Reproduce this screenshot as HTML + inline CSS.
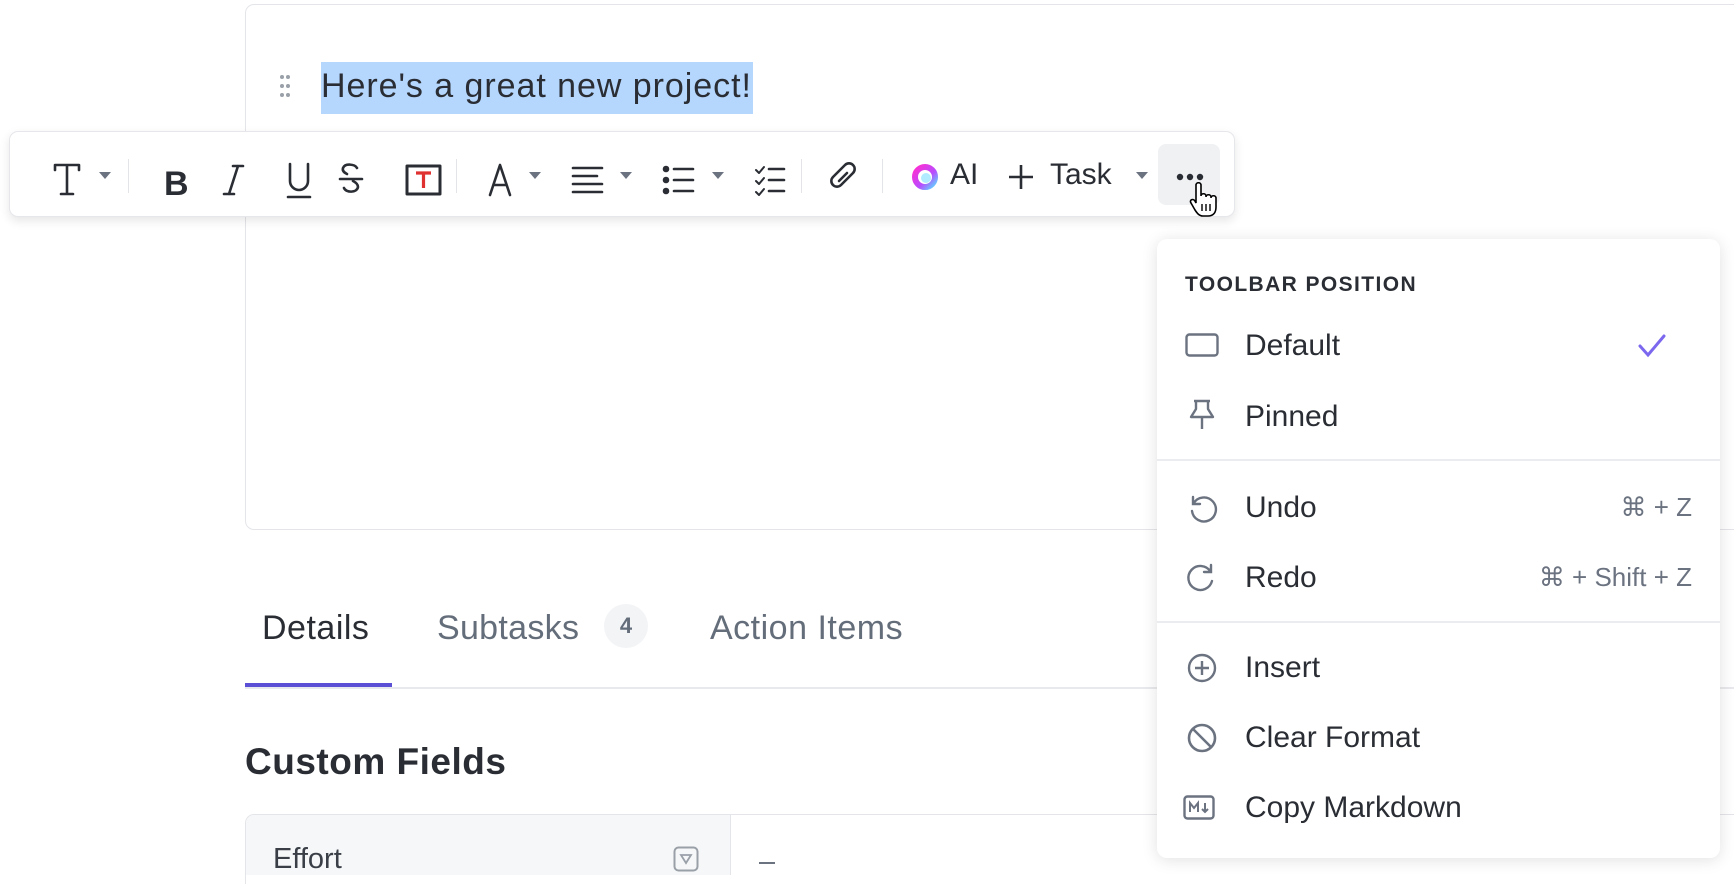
<!DOCTYPE html>
<html><head><meta charset="utf-8"><style>
*{box-sizing:border-box;margin:0;padding:0}
body{width:1734px;height:870px;overflow:hidden;background:#fff;font-family:"Liberation Sans",sans-serif;color:#2a2e34;position:relative}
.abs{position:absolute}
.card{left:245px;top:4px;width:1600px;height:526px;border:1px solid #e4e5e9;border-radius:9px}
.sel{left:321px;top:62px;height:52px;width:432px;background:#b5d6fd}
.title{left:321px;top:67px;font-size:34px;letter-spacing:.95px;color:#2a2e34;white-space:nowrap}
.tb{left:9px;top:131px;width:1226px;height:86px;background:#fff;border:1px solid #e6e7eb;border-radius:9px;box-shadow:0 4px 10px rgba(0,0,0,.10);z-index:5}
.sep{position:absolute;top:27px;width:1px;height:34px;background:#e2e4e8}
.menu{left:1157px;top:239px;width:563px;height:619px;background:#fff;border-radius:10px;box-shadow:0 2px 16px rgba(0,0,0,.12);z-index:10}
.mi{position:absolute;left:88px;font-size:30px;color:#2a2e34;white-space:nowrap}
.sc{position:absolute;right:28px;font-size:26px;color:#6b7280;white-space:nowrap}
.hr{position:absolute;left:0;right:0;height:2px;background:#ebecef}
.ic{position:absolute;left:28px}
</style></head><body>
<div class="abs card"></div>
<svg class="abs" style="left:279px;top:74px" width="12" height="24"><g fill="#9aa0a8"><circle cx="3" cy="3" r="2"/><circle cx="9" cy="3" r="2"/><circle cx="3" cy="12" r="2"/><circle cx="9" cy="12" r="2"/><circle cx="3" cy="21" r="2"/><circle cx="9" cy="21" r="2"/></g></svg>
<div class="abs sel"></div>
<div class="abs title">Here's a great new project!</div>

<div class="abs tb">
<svg width="1226" height="86" style="position:absolute;left:-1px;top:-1px" fill="none" stroke="#2a2e34" stroke-width="2.6" stroke-linecap="round" stroke-linejoin="round">
<path d="M46 34h24M46 34v5M70 34v5M58 34v29M52 63h12"/>
<path d="M90 41h12l-6 7z" fill="#6b7280" stroke="none"/>
<text x="155" y="64" font-family="Liberation Sans" font-weight="bold" font-size="34" fill="#2a2e34" stroke="none">B</text>
<path d="M224 35h10M215 63h10M229 35l-9 28"/>
<path d="M281 33v17a9 9 0 0 0 18 0v-17M279 66h22"/>
<path d="M348 37c-2-4-12-5-14 0c-1 3 2 5 4 6M335 57c2 5 13 5 14-1c0-3-3-5-5-6M331 48h22"/>
<rect x="398" y="35" width="33" height="28" stroke-width="3"/>
<path d="M407 42h15M414.5 42v15" stroke="#e03131" stroke-width="3.2" stroke-linecap="butt"/>
<path d="M481 64l10-30l10 30M485 54h12"/>
<path d="M520 41h12l-6 7z" fill="#6b7280" stroke="none"/>
<path d="M564 37h29M564 45h24M564 53h29M564 61h29"/>
<path d="M611 41h12l-6 7z" fill="#6b7280" stroke="none"/>
<circle cx="657" cy="38" r="2" fill="#2a2e34"/><circle cx="657" cy="49" r="2" fill="#2a2e34"/><circle cx="657" cy="60" r="2" fill="#2a2e34"/>
<path d="M665 38h19M665 49h19M665 60h19"/>
<path d="M703 41h12l-6 7z" fill="#6b7280" stroke="none"/>
<path d="M747 39l3 3 5-6M747 50l3 3 5-6M747 61l3 3 5-6" stroke-width="2"/>
<path d="M760 38h15M760 49h15M760 60h15"/>
<path d="M838 48l-6 6a5 5 0 0 1-8-8l6-6M838 48l6-6a5 5 0 0 0-8-8l-6 6M830 50l8-8"/>
</svg>
<div class="sep" style="left:118px"></div>
<div class="sep" style="left:446px"></div>
<div class="sep" style="left:791px"></div>
<div class="sep" style="left:872px"></div>
<svg class="abs" style="left:900px;top:30px" width="30" height="30"><defs><linearGradient id="g" x1="0" y1="0" x2="1" y2="1"><stop offset="0" stop-color="#ff2ed1"/><stop offset=".6" stop-color="#b84cff"/><stop offset="1" stop-color="#5ed4ff"/></linearGradient></defs><circle cx="15" cy="15" r="10" fill="none" stroke="url(#g)" stroke-width="6"/><circle cx="16" cy="16" r="5" fill="#8fe3ff" opacity=".7"/></svg>
<div class="abs" style="left:940px;top:26px;font-size:30px">AI</div>
<svg class="abs" style="left:997px;top:31px" width="28" height="28"><path d="M14 2v24M2 14h24" stroke="#2a2e34" stroke-width="2.6"/></svg>
<div class="abs" style="left:1040px;top:26px;font-size:30px">Task</div>
<svg class="abs" style="left:1125px;top:39px" width="14" height="10"><path d="M1 1h12l-6 7z" fill="#6b7280"/></svg>
<div class="abs" style="left:1148px;top:12px;width:62px;height:61px;background:#f0f1f3;border-radius:8px"></div>
<svg class="abs" style="left:1165px;top:40px" width="30" height="10"><g fill="#2a2e34"><circle cx="5" cy="5" r="3.2"/><circle cx="15" cy="5" r="3.2"/><circle cx="25" cy="5" r="3.2"/></g></svg>
<svg class="abs" style="left:1179px;top:50px" width="30" height="36"><path d="M7 3c0-3 5-3 5 0v11c0-3 5-3 5 0v1c0-3 5-3 5 0v1c0-3 5-3 5 0v9c0 6-3 9-8 9h-5c-4 0-6-3-8-6l-4-7c-2-3 2-5 4-2l1 2z" fill="#fff" stroke="#000" stroke-width="1.6"/><path d="M13 22v7M17 22v7M21 22v7" stroke="#000" stroke-width="1.4"/></svg>
</div>

<div class="abs menu">
<div class="abs" style="left:28px;top:34px;font-size:21px;font-weight:bold;letter-spacing:1.4px;color:#2a2e34">TOOLBAR POSITION</div>
<svg class="ic" style="top:94px" width="34" height="24"><rect x="1.5" y="1.5" width="31" height="21" rx="3" fill="none" stroke="#6b7280" stroke-width="2.4"/></svg>
<div class="mi" style="top:90px">Default</div>
<svg class="abs" style="left:480px;top:94px" width="30" height="26"><path d="M3 13l8 9 16-19" fill="none" stroke="#7b68ee" stroke-width="3" stroke-linecap="round"/></svg>
<svg class="ic" style="top:160px" width="34" height="32"><path d="M9 2h16M11 2v8l-5 8h22l-5-8v-8M17 18v12" fill="none" stroke="#6b7280" stroke-width="2.4" stroke-linejoin="round"/></svg>
<div class="mi" style="top:161px">Pinned</div>
<div class="hr" style="top:220px"></div>
<svg class="ic" style="top:252px" width="34" height="34"><path d="M8 6v7h7M8.5 12.5A12 12 0 1 1 7 20" fill="none" stroke="#6b7280" stroke-width="2.4" stroke-linecap="round"/></svg>
<div class="mi" style="top:252px">Undo</div>
<div class="sc" style="top:253px">⌘ + Z</div>
<svg class="ic" style="top:322px" width="34" height="34"><path d="M26 4v7h-7M25.5 10.5A12 12 0 1 0 27 20" fill="none" stroke="#6b7280" stroke-width="2.4" stroke-linecap="round"/></svg>
<div class="mi" style="top:322px">Redo</div>
<div class="sc" style="top:323px">⌘ + Shift + Z</div>
<div class="hr" style="top:382px"></div>
<svg class="ic" style="top:412px" width="34" height="34"><circle cx="17" cy="17" r="13" fill="none" stroke="#6b7280" stroke-width="2.4"/><path d="M17 10v14M10 17h14" stroke="#6b7280" stroke-width="2.4"/></svg>
<div class="mi" style="top:412px">Insert</div>
<svg class="ic" style="top:482px" width="34" height="34"><circle cx="17" cy="17" r="13" fill="none" stroke="#6b7280" stroke-width="2.6"/><path d="M8 8l18 18" stroke="#6b7280" stroke-width="2.6"/></svg>
<div class="mi" style="top:482px">Clear Format</div>
<svg class="ic" style="top:556px;left:26px" width="34" height="26"><rect x="1.5" y="1.5" width="29" height="22" rx="3" fill="none" stroke="#6b7280" stroke-width="2.4"/><path d="M7 17v-9l4 5 4-5v9M22 8v9M19 14l3 3 3-3" fill="none" stroke="#6b7280" stroke-width="2"/></svg>
<div class="mi" style="top:552px">Copy Markdown</div>
</div>

<div class="abs" style="left:262px;top:609px;font-size:34px;letter-spacing:.5px;color:#2a2e34">Details</div>
<div class="abs" style="left:437px;top:609px;font-size:34px;letter-spacing:.3px;color:#646d7a">Subtasks</div>
<div class="abs" style="left:604px;top:604px;width:44px;height:44px;border-radius:50%;background:#f3f4f6;color:#646d7a;font-size:22px;font-weight:bold;text-align:center;line-height:44px">4</div>
<div class="abs" style="left:710px;top:609px;font-size:34px;letter-spacing:.5px;color:#646d7a">Action Items</div>
<div class="abs" style="left:245px;top:687px;width:1489px;height:2px;background:#e8e9ec"></div>
<div class="abs" style="left:245px;top:683px;width:147px;height:4px;background:#5b4fd6"></div>
<div class="abs" style="left:245px;top:741px;font-size:37px;letter-spacing:.5px;font-weight:bold;color:#2a2e34">Custom Fields</div>
<div class="abs" style="left:245px;top:814px;width:1500px;height:70px;border:1px solid #e4e5e9;border-bottom:none;border-radius:9px 0 0 0"></div>
<div class="abs" style="left:246px;top:815px;width:485px;height:60px;background:#f6f7f9;border-right:1px solid #e4e5e9;border-radius:8px 0 0 0"></div>
<div class="abs" style="left:273px;top:843px;font-size:29px;color:#3a3f47">Effort</div>
<svg class="abs" style="left:673px;top:846px" width="26" height="26"><rect x="1.5" y="1.5" width="23" height="23" rx="4" fill="none" stroke="#9aa0a8" stroke-width="2"/><path d="M8 9h10l-5 8z" fill="none" stroke="#9aa0a8" stroke-width="1.8"/></svg>
<div class="abs" style="left:759px;top:862px;width:16px;height:2px;background:#6b7280"></div>
</body></html>
